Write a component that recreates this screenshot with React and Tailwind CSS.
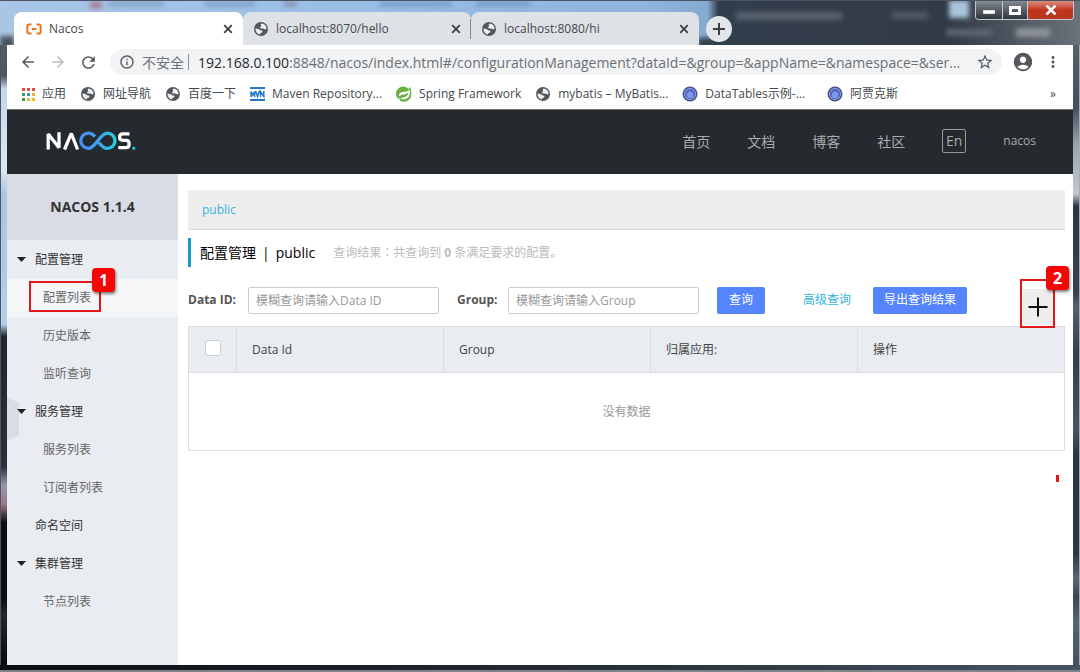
import { useState } from 'react';
import {
  MdAccountCircle,
  MdArrowBack,
  MdArrowForward,
  MdInfoOutline,
  MdMoreVert,
  MdRefresh,
  MdStarBorder,
} from 'react-icons/md';

const TABS = [
  { title: 'Nacos', icon: 'nacos', active: true },
  { title: 'localhost:8070/hello', icon: 'globe' },
  { title: 'localhost:8080/hi', icon: 'globe' },
];

const BOOKMARKS = [
  { label: '应用', icon: 'apps' },
  { label: '网址导航', icon: 'globe' },
  { label: '百度一下', icon: 'globe' },
  { label: 'Maven Repository...', icon: 'mvn' },
  { label: 'Spring Framework', icon: 'spring' },
  { label: 'mybatis – MyBatis...', icon: 'globe' },
  { label: 'DataTables示例-...', icon: 'ball' },
  { label: '阿贾克斯', icon: 'ball' },
];

const MENU = [
  { label: '配置管理', group: true },
  { label: '配置列表', current: true, mark: '1' },
  { label: '历史版本' },
  { label: '监听查询' },
  { label: '服务管理', group: true },
  { label: '服务列表' },
  { label: '订阅者列表' },
  { label: '命名空间', top: true },
  { label: '集群管理', group: true },
  { label: '节点列表' },
];

const NAV = ['首页', '文档', '博客', '社区'];

// Small favicons used by the tabs and the bookmark bar
const SiteIcon = ({ name }) => {
  switch (name) {
    case 'nacos':
      return (
        <svg viewBox="0 0 16 12" className="w-4 h-3 shrink-0" fill="none" stroke="#f07316" strokeWidth="2">
          <path d="M5.5 1.5H3.2Q1.3 1.5 1.3 3.4V8.6Q1.3 10.5 3.2 10.5H5.5" />
          <path d="M10.5 1.5H12.8Q14.7 1.5 14.7 3.4V8.6Q14.7 10.5 12.8 10.5H10.5" />
          <path d="M5.6 6H10.4" />
        </svg>
      );
    case 'apps':
      return (
        <svg viewBox="0 0 13 13" className="w-[13px] h-[13px] shrink-0">
          <path fill="#e04a3f" d="M0 0h3v3H0zM5 0h3v3H5zM10 0h3v3h-3z" />
          <path fill="#3c9d5b" d="M0 5h3v3H0z" />
          <path fill="#4285e8" d="M5 5h3v3H5z" />
          <path fill="#eeb52c" d="M10 5h3v3h-3zM5 10h3v3H5zM10 10h3v3h-3z" />
          <path fill="#3c9d5b" d="M0 10h3v3H0z" />
        </svg>
      );
    case 'mvn':
      return (
        <svg viewBox="0 0 15 14" className="w-[15px] h-[14px] shrink-0" fill="none" stroke="#2577c8">
          <path strokeWidth="2" d="M0 1H15M0 13H15" />
          <path strokeWidth="1.5" d="M1 10V4.5L2.8 8L4.6 4.5V10M5.6 4L7.5 9.5L9.4 4M10.5 10V4.5L13.8 9.5V4" />
        </svg>
      );
    case 'spring':
      return (
        <svg viewBox="0 0 16 16" className="w-4 h-4 shrink-0">
          <path
            fill="#69b03f"
            d="M14.2.8C13.8 1.6 13.3 2.3 12.7 2.9A7.3 7.3 0 1 0 2.5 13.3L2.8 13.6A7.3 7.3 0 0 0 15.3 8.6C15.5 6.7 15 4 14.2.8Z"
          />
          <path fill="#fff" d="M13.6 3.6C11.5 6.2 9 5.6 6.6 6C3.8 6.5 2.5 8.4 2.7 10.7C5.6 7.9 9.6 9.2 12.6 6.6C12.2 9.4 9.7 11.4 6.9 11.5L4 12.3C6.5 14.2 10.4 13.6 12.5 11.1C14.3 9 14.3 6.4 13.6 3.6Z" />
          <circle cx="3.3" cy="13" r=".8" fill="#fff" />
        </svg>
      );
    case 'ball':
      return (
        <svg viewBox="0 0 16 16" className="w-4 h-4 shrink-0">
          <circle cx="8" cy="8" r="7.5" fill="#474f86" />
          <circle cx="8" cy="8" r="6" fill="#a4aae0" />
          <circle cx="8" cy="8" r="5.2" fill="#4f69ca" />
          <circle cx="8" cy="9" r="3.2" fill="#7f9ae8" />
        </svg>
      );
    default:
      return (
        <svg viewBox="0 0 16 16" className="w-4 h-4 shrink-0">
          <circle cx="8" cy="8" r="7" fill="#53575c" />
          <path fill="#eef0f2" d="M8.6 2.4C11.4 2.6 13.4 4.8 13.6 7.4L12.2 8.6L10.4 7.6L8 7.4L6.8 6.2L8.4 5.2L7.6 3.8Z" />
          <path fill="#eef0f2" d="M2.4 7.6L5.4 8L7.8 9.4L9.6 9.8L9 11.6L7.2 12.2L6.8 13.5C4.2 13 2.4 10.6 2.4 7.6Z" />
        </svg>
      );
  }
};

// Desktop seen through the glass title bar
const GlassBackdrop = () => (
  <svg
    className="absolute inset-0 w-full h-full"
    viewBox="0 0 1080 45"
    preserveAspectRatio="none"
    aria-hidden="true"
  >
    <defs>
      <linearGradient id="sky" x1="0" x2="1" y1="0" y2="0">
        <stop offset="0" stopColor="#a9c6e6" />
        <stop offset=".25" stopColor="#9cc0e6" />
        <stop offset=".6" stopColor="#8fb4dd" />
        <stop offset=".655" stopColor="#86a9cf" />
        <stop offset=".665" stopColor="#333e4d" />
        <stop offset=".88" stopColor="#323a46" />
        <stop offset="1" stopColor="#6b727b" />
      </linearGradient>
      <filter id="soft" x="-20%" y="-50%" width="140%" height="200%">
        <feGaussianBlur stdDeviation="2.5" />
      </filter>
    </defs>
    <rect width="1080" height="45" fill="url(#sky)" />
    <g filter="url(#soft)">
      <rect x="90" y="2" width="12" height="6" fill="#a5788b" />
      <rect x="108" y="2" width="56" height="4" fill="#7f9cc0" />
      <rect x="205" y="2" width="50" height="4" fill="#7a9ac2" />
      <rect x="284" y="2" width="12" height="4" fill="#8c80a0" />
      <rect x="380" y="2" width="72" height="4" fill="#6f94c2" />
      <rect x="476" y="2" width="55" height="4" fill="#6f94c2" />
      <rect x="0" y="36" width="14" height="14" fill="#4c535c" />
      <rect x="698" y="38" width="40" height="10" fill="#2f3c4c" />
      <rect x="736" y="12" width="106" height="8" fill="#59626f" />
      <rect x="892" y="12" width="36" height="7" fill="#515a67" />
      <rect x="949" y="0" width="20" height="18" fill="#a9c4dc" />
      <rect x="946" y="29" width="46" height="7" fill="#5d6570" />
      <rect x="1016" y="28" width="34" height="9" fill="#8d929a" />
    </g>
  </svg>
);

const WindowButtons = () => (
  <div className="flex h-[19px] rounded-b border border-t-0 border-[#c5cad0] overflow-hidden">
    <button aria-label="Minimize" className="w-[27px] flex items-center justify-center bg-gradient-to-b from-[#848a92] to-[#31363e] border-r border-[#c5cad0]">
      <span className="w-3 h-1 mt-1 bg-white border border-[#ddd]" />
    </button>
    <button aria-label="Maximize" className="w-[25px] flex items-center justify-center bg-gradient-to-b from-[#848a92] to-[#31363e] border-r border-[#c5cad0]">
      <span className="w-3 h-[9px] border-[3px] border-white" />
    </button>
    <button aria-label="Close" className="w-[45px] flex items-center justify-center bg-gradient-to-b from-[#d98d80] via-[#c2321c] to-[#b33a20]">
      <svg viewBox="0 0 12 10" className="w-3 h-[10px]" stroke="#fff" strokeWidth="2.6">
        <path d="M1.5 .5L10.5 9.5M10.5 .5L1.5 9.5" />
      </svg>
    </button>
  </div>
);

const TitleBar = () => (
  <div className="relative h-[45px] bg-[#333e4d]">
    <GlassBackdrop />
    <div className="relative flex h-full pl-[7px] pr-[6px] border-t border-[#4a5362]">
      <div className="flex flex-1 min-w-0 items-end">
        {TABS.map((tab, i) => (
          <div
            key={tab.title}
            className={`flex items-center h-[33px] pr-2 rounded-t-lg text-[#45494d] ${
              tab.active ? 'w-[229px] ml-[7px] pl-3 bg-white' : 'w-[228px] pl-[10px] bg-[#dee1e6]'
            }`}
          >
            <SiteIcon name={tab.icon} />
            <span className="flex-1 ml-[7px] text-[12px] truncate">{tab.title}</span>
            <button aria-label={`Close ${tab.title}`}>
              <svg viewBox="0 0 14 14" className="w-[14px] h-[14px]" stroke="#3c4043" strokeWidth="1.8">
                <path d="M3.2 3.2L10.8 10.8M10.8 3.2L3.2 10.8" />
              </svg>
            </button>
            {i === 1 && <span className="w-px h-5 ml-[7px] -mr-2 bg-[#85898f]" />}
          </div>
        ))}
        <button aria-label="New tab" className="w-[26px] h-[26px] mb-[3px] ml-[7px] rounded-full bg-[#e2e6eb] flex items-center justify-center">
          <svg viewBox="0 0 14 14" className="w-[14px] h-[14px]" stroke="#3c4043" strokeWidth="2">
            <path d="M7 1V13M1 7H13" />
          </svg>
        </button>
      </div>
      <WindowButtons />
    </div>
  </div>
);

const AddressBar = () => (
  <div className="flex items-center h-[34px] pl-3 pr-[11px] text-[#55595e]">
    <button aria-label="Back"><MdArrowBack className="w-[18px] h-[18px]" /></button>
    <button aria-label="Forward" className="ml-3"><MdArrowForward className="w-[18px] h-[18px] text-[#bdbfc2]" /></button>
    <button aria-label="Reload" className="ml-3"><MdRefresh className="w-[19px] h-[19px]" /></button>
    <div className="flex flex-1 min-w-0 items-center h-[26px] ml-3 pl-[9px] pr-2 rounded-full bg-[#f1f3f4]">
      <MdInfoOutline className="w-4 h-4 shrink-0" />
      <span className="ml-[7px] text-[14px] whitespace-nowrap text-[#6c7075]">不安全</span>
      <span className="w-px h-4 ml-1 mr-[9px] bg-[#8f9296]" />
      <span className="flex-1 min-w-0 text-[14px] whitespace-nowrap overflow-hidden text-[#6c7075]">
        <span className="text-[#27292c]">192.168.0.100</span>
        :8848/nacos/index.html#/configurationManagement?dataId=&amp;group=&amp;appName=&amp;namespace=&amp;ser...
      </span>
      <button aria-label="Bookmark this page"><MdStarBorder className="w-[18px] h-[18px]" /></button>
    </div>
    <button aria-label="Profile" className="ml-[10px]"><MdAccountCircle className="w-[22px] h-[22px]" /></button>
    <button aria-label="More" className="ml-[10px]"><MdMoreVert className="w-[18px] h-[18px]" /></button>
  </div>
);

const BookmarkBar = () => (
  <div className="flex items-center h-[31px] pl-[15px] pr-[17px] gap-[14px] text-[12px] text-[#45494d] border-b border-[#6d7174]">
    {BOOKMARKS.map((b) => (
      <a key={b.label} href="#" className="flex items-center gap-[7px] whitespace-nowrap last-of-type:ml-2">
        <SiteIcon name={b.icon} />
        {b.label}
      </a>
    ))}
    <button aria-label="More bookmarks" className="ml-auto">»</button>
  </div>
);

const NacosLogo = () => (
  <svg viewBox="0 0 90 20" className="w-[90px] h-5" fill="none" strokeWidth="3.3" role="img" aria-label="NACOS.">
    <defs>
      <linearGradient id="loop" gradientUnits="userSpaceOnUse" x1="33" x2="70" y1="0" y2="0">
        <stop offset="0" stopColor="#4a8df5" />
        <stop offset=".5" stopColor="#3f9df0" />
        <stop offset="1" stopColor="#24d3dc" />
      </linearGradient>
    </defs>
    <path stroke="#fff" strokeLinejoin="bevel" d="M2.2 18.5V3L13 16.6V1.2" />
    <path stroke="#fff" strokeLinejoin="bevel" d="M18.5 18.5L25.3 2.5L31.6 18.5" />
    <path
      stroke="url(#loop)"
      d="M49 5.6C47 3.2 44.8 2.2 42.4 2.2A7.6 7.6 0 1 0 42.4 17.4C49.6 17.4 54 2.2 61.4 2.2A7.6 7.6 0 1 1 61.4 17.4C57.6 17.4 54.8 14.2 52 10.4"
    />
    <path stroke="#fff" d="M83.5 2.8H76.8Q73.6 2.8 73.6 6T76.8 9.4H80.2Q83.2 9.4 83.2 13T80 16.7H72.3" />
    <path fill="#26c9dd" d="M86.4 15.8h2.8v2.8h-2.8z" />
  </svg>
);

const SiteHeader = () => (
  <header className="flex items-center h-16 pl-[39px] pr-[37px] pb-[2px] bg-[#252a2f]">
    <NacosLogo />
    <nav className="flex flex-1 items-center justify-end gap-[37px] text-[14px] text-[#a9abad]">
      {NAV.map((item) => (
        <a key={item} href="#">{item}</a>
      ))}
      <button className="w-6 h-6 border border-[#9a9c9e] rounded-xs leading-[22px]">En</button>
      <a href="#" className="text-[12px]">nacos</a>
    </nav>
  </header>
);

/** Red numbered marker pinned to the corner of a highlighted area */
const Badge = ({ children }) => (
  <span className="absolute -top-[15px] -right-4 z-20 w-[23px] h-6 rounded bg-[#f60505] text-white text-[16px] leading-6 font-bold text-center shadow-[1px_2px_3px_rgba(0,0,0,0.5)]">
    {children}
  </span>
);

const Sidebar = () => (
  <aside className="relative w-[171px] shrink-0 bg-[#e9ecf1] text-[12px]">
    <h1 className="h-[66px] leading-[66px] text-center text-[14px] font-bold text-[#333] bg-[#d9dce5]">NACOS 1.1.4</h1>
    {/* Collapse handle */}
    <svg viewBox="0 0 12 44" className="absolute left-0 top-[223px] w-3 h-11" aria-hidden="true">
      <path fill="#d9dce3" d="M0 0L12 6V38L0 44Z" />
    </svg>
    <ul className="relative pt-px">
      {MENU.map((item) => (
        <li key={item.label} className={item.current ? 'bg-[#f4f6f8]' : ''}>
          <a
            href="#"
            className={`relative flex items-center h-[38px] ${
              item.group ? 'pl-[10px] text-[#333]' : item.top ? 'pl-[28px] text-[#333]' : 'pl-[36px] text-[#666]'
            }`}
          >
            {item.group && (
              <svg viewBox="0 0 9 7" className="w-[9px] h-[7px] mr-[9px]" fill="#222" aria-hidden="true">
                <path d="M0 0H9L4.5 5Z" />
              </svg>
            )}
            {item.label}
            {item.mark && (
              <span className="absolute left-[22px] top-[2px] w-[72px] h-[31px] border-2 border-[#e01818]">
                <Badge>{item.mark}</Badge>
              </span>
            )}
          </a>
        </li>
      ))}
    </ul>
  </aside>
);

const SearchForm = () => {
  const [dataId, setDataId] = useState('');
  const [group, setGroup] = useState('');
  const field = 'w-[191px] h-[27px] px-[7px] border border-[#c9ccd1] rounded-xs text-[12px] placeholder:text-[#999]';

  return (
    <form className="flex items-center h-[50px] mt-2 text-[12px]" onSubmit={(e) => e.preventDefault()}>
      <label htmlFor="dataId" className="w-[60px] font-bold text-[#555]">Data ID:</label>
      <input id="dataId" className={field} placeholder="模糊查询请输入Data ID" value={dataId} onChange={(e) => setDataId(e.target.value)} />
      <label htmlFor="group" className="w-[51px] ml-[18px] font-bold text-[#555]">Group:</label>
      <input id="group" className={field} placeholder="模糊查询请输入Group" value={group} onChange={(e) => setGroup(e.target.value)} />
      <button className="w-12 h-[27px] ml-[18px] rounded-xs bg-[#5584ff] text-white">查询</button>
      <a href="#" className="ml-[38px] text-[#33b4dd]">高级查询</a>
      <button type="button" className="w-[94px] h-[27px] ml-[22px] rounded-xs bg-[#5584ff] text-white">导出查询结果</button>
      <button type="button" aria-label="新建配置" className="relative self-end w-[30px] h-9 ml-auto mr-3 bg-[#ededed] flex items-center justify-center">
        <svg viewBox="0 0 20 20" className="w-5 h-5" stroke="#111" strokeWidth="2">
          <path d="M10 .5V19.5M.5 10H19.5" />
        </svg>
        <span className="absolute -left-[3px] -right-[2px] -top-[10px] -bottom-[3px] z-10 border-2 border-[#e01818]">
          <Badge>2</Badge>
        </span>
      </button>
    </form>
  );
};

const ConfigTable = () => (
  <table className="w-full mt-px table-fixed border-collapse border border-[#dcdee3] text-[12px]">
    <thead className="bg-[#e9ecf1] text-[#444]">
      <tr className="h-[46px] text-left">
        <th className="w-12 pb-1 border border-[#dcdee3] text-center">
          <input type="checkbox" aria-label="全选" className="appearance-none block mx-auto w-4 h-4 bg-white border border-[#c9ccd1] rounded-[3px]" />
        </th>
        {['Data Id', 'Group', '归属应用:', '操作'].map((col) => (
          <th key={col} className="px-[15px] border border-[#dcdee3] font-normal">{col}</th>
        ))}
      </tr>
    </thead>
    <tbody>
      <tr className="h-[78px]">
        <td colSpan={5} className="text-center text-[#999]">没有数据</td>
      </tr>
    </tbody>
  </table>
);

const App = () => {
  return (
    <div className="min-h-screen flex flex-col bg-[#2b333e] font-['Open_Sans','Noto_Sans_CJK_SC',sans-serif]">
      <TitleBar />
      <div className="flex flex-1">
        {/* Left window edge */}
        <div className="w-[7px] shrink-0 border-l border-[#4d5560] bg-[linear-gradient(to_bottom,#565c64_0%,#50565e_5%,#c4d6ea_7%,#dde8f4_20%,#a9c5e4_24%,#b4cfec_45%,#20262d_47%,#2a3038_68%,#9098ac_71%,#a0788c_74%,#0c0e12_77%,#0b0d10_89%,#23272e_92%,#08090b_100%)]" />
        <div className="flex flex-1 flex-col min-w-0 bg-white">
          <AddressBar />
          <BookmarkBar />
          <SiteHeader />
          <div className="flex flex-1">
            <Sidebar />
            <main className="relative flex-1 min-w-0 pt-4 pl-[10px] pr-2">
              <div className="flex items-center h-10 px-[14px] bg-[#ededed] border-b border-[#dadada] text-[12px]">
                <a href="#" className="text-[#33b4dd]">public</a>
              </div>
              <div className="flex items-center h-[29px] mt-2 pl-[9px] border-l-[3px] border-[#159bc9]">
                <h2 className="flex items-center gap-[6px] text-[14px] text-black">
                  配置管理 <span>|</span> <span>public</span>
                </h2>
                <p className="ml-[18px] text-[12px] text-[#bbb]">
                  查询结果<span className="font-['Noto_Sans_CJK_JP']">：</span>共查询到 <strong>0</strong> 条满足要求的配置。
                </p>
              </div>
              <SearchForm />
              <ConfigTable />
              <span className="absolute right-[14px] top-[301px] w-[3px] h-[7px] bg-[#e01818]" />
            </main>
          </div>
        </div>
        {/* Right window edge */}
        <div className="w-[7px] shrink-0 border-r border-[#a5adb6] bg-[linear-gradient(to_bottom,#59616b_0%,#444d58_10%,#9aa2ab_16%,#c3c8ce_24%,#2d3541_26%,#39424e_40%,#56606d_42%,#343d49_50%,#4a5562_62%,#2c343f_66%,#2f3742_82%,#5a6675_86%,#3c4652_89%,#556473_93%,#46525f_100%)]" />
      </div>
      <div className="h-[7px] border-b-2 border-[#7d848c] bg-gradient-to-r from-[#0c0e12] via-[#232a33] to-[#465462]" />
    </div>
  );
};

export default App;
